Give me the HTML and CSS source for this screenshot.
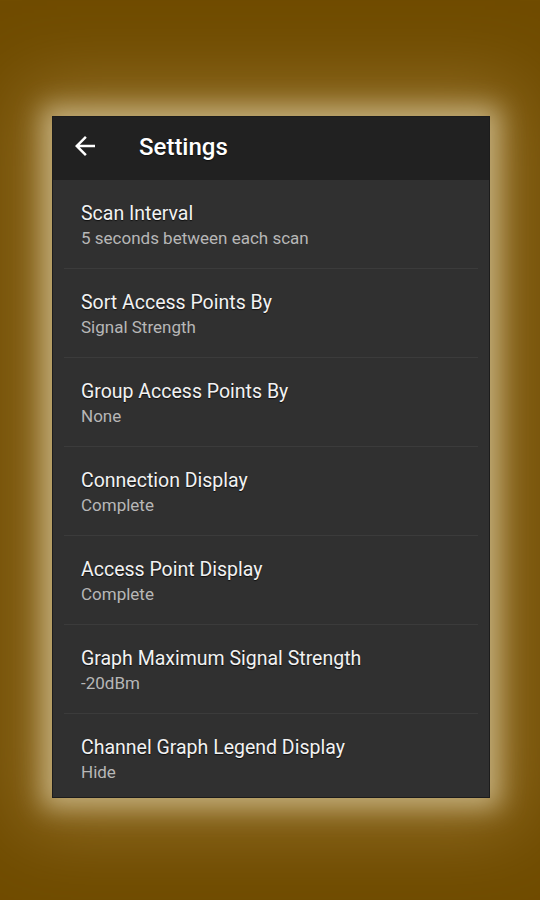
FILE: index.html
```html
<!DOCTYPE html>
<html>
<head>
<meta charset="utf-8">
<link rel="stylesheet" href="styles.css">
</head>
<body>
<div class="stage">
  <div class="screen">
    <header class="appbar">
      <svg class="back" width="30" height="30" viewBox="0 0 24 24"><path d="M20 11H7.83l5.59-5.59L12 4l-8 8 8 8 1.41-1.41L7.83 13H20v-2z" fill="#fff"/></svg>
      <h1 class="title">Settings</h1>
    </header>
    <ul class="prefs">
      <li class="pref"><span class="pref-title">Scan Interval</span><span class="pref-sub">5 seconds between each scan</span></li>
      <li class="pref"><span class="pref-title">Sort Access Points By</span><span class="pref-sub">Signal Strength</span></li>
      <li class="pref"><span class="pref-title">Group Access Points By</span><span class="pref-sub">None</span></li>
      <li class="pref"><span class="pref-title">Connection Display</span><span class="pref-sub">Complete</span></li>
      <li class="pref"><span class="pref-title">Access Point Display</span><span class="pref-sub">Complete</span></li>
      <li class="pref"><span class="pref-title">Graph Maximum Signal Strength</span><span class="pref-sub">-20dBm</span></li>
      <li class="pref"><span class="pref-title">Channel Graph Legend Display</span><span class="pref-sub">Hide</span></li>
    </ul>
  </div>
</div>
</body>
</html>
```
FILE: styles.css
```css
html, body {
  margin: 0;
  padding: 0;
  width: 540px;
  height: 900px;
  overflow: hidden;
  background: #704c00;
  font-family: Roboto, "Liberation Sans", sans-serif;
}
.stage {
  width: 540px;
  height: 900px;
  padding: 116px 50px 0 52px;
  box-sizing: border-box;
}
.screen {
  width: 438px;
  height: 682px;
  background: #303030;
  border: 1px solid #1c1c1c;
  box-sizing: border-box;
  box-shadow: 0 0 24px 10px rgba(200, 180, 130, 0.9), 0 0 70px 30px rgba(180, 145, 80, 0.55);
  overflow: hidden;
  display: flex;
  flex-direction: column;
}
.appbar {
  height: 63px;
  flex: none;
  background: #212121;
  display: flex;
  align-items: center;
  padding-left: 17px;
}
.back {
  display: block;
  margin-top: -5px;
}
.title {
  margin: -4px 0 0 39px;
  font-size: 24px;
  font-weight: 500;
  color: #fff;
  text-shadow: 0 1px 1px rgba(0,0,0,0.6);
}
.prefs {
  list-style: none;
  margin: 0;
  padding: 0;
}
.pref {
  height: 89px;
  box-sizing: border-box;
  margin: 0 11px;
  padding: 22px 0 0 17px;
  border-bottom: 1px solid #3b3b3b;
  display: flex;
  flex-direction: column;
}
.pref:last-child {
  border-bottom: none;
}
.pref-title {
  font-size: 19.5px;
  line-height: 24px;
  color: #f2f2f2;
  text-shadow: 0 1px 1px rgba(0,0,0,0.7);
}
.pref-sub {
  font-size: 17px;
  line-height: 20px;
  margin-top: 2px;
  color: #b7b7b7;
}
```
